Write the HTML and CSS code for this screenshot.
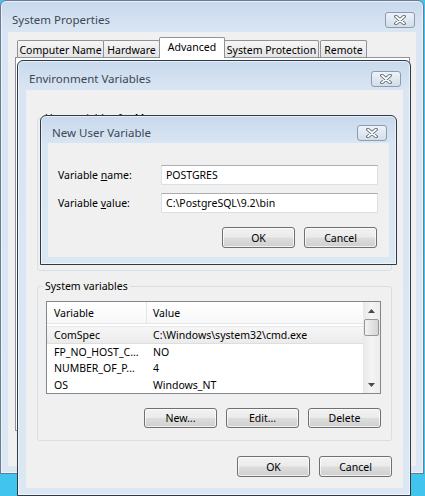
FILE: index.html
```html
<!DOCTYPE html>
<html>
<head>
<meta charset="utf-8">
<title>System Properties</title>
<link rel="stylesheet" href="styles.css">
</head>
<body>
<div class="desktop">

  <div class="window sys">
    <div class="titlebar">
      <span class="title">System Properties</span>
      <span class="close"><svg width="14" height="10" viewBox="0 0 14 10"><path d="M3 1.5 L11 8.5 M11 1.5 L3 8.5" stroke="#55606c" stroke-width="3.6" stroke-linecap="round"/><path d="M3 1.5 L11 8.5 M11 1.5 L3 8.5" stroke="#ffffff" stroke-width="1.8" stroke-linecap="round"/></svg></span>
    </div>
    <div class="client sys-client">
      <div class="tabs">
        <div class="tab t-cn">Computer Name</div>
        <div class="tab t-hw">Hardware</div>
        <div class="tab t-adv active">Advanced</div>
        <div class="tab t-sp">System Protection</div>
        <div class="tab t-rm">Remote</div>
      </div>
      <div class="tabpage"></div>
    </div>
  </div>

  <div class="window env">
    <div class="titlebar">
      <span class="title">Environment Variables</span>
      <span class="close"><svg width="14" height="10" viewBox="0 0 14 10"><path d="M3 1.5 L11 8.5 M11 1.5 L3 8.5" stroke="#55606c" stroke-width="3.6" stroke-linecap="round"/><path d="M3 1.5 L11 8.5 M11 1.5 L3 8.5" stroke="#ffffff" stroke-width="1.8" stroke-linecap="round"/></svg></span>
    </div>
    <div class="client env-client">
      <fieldset class="group user-group">
        <legend>User variables for Manager</legend>
        <div class="user-space"></div>
      </fieldset>
      <fieldset class="group sys-group">
        <legend>System variables</legend>
        <div class="listview">
          <div class="lv-body">
            <div class="lv-head"><span class="c1">Variable</span><span class="c2">Value</span></div>
            <div class="lv-row sel"><span class="c1">ComSpec</span><span class="c2">C:\Windows\system32\cmd.exe</span></div>
            <div class="lv-row"><span class="c1">FP_NO_HOST_C...</span><span class="c2">NO</span></div>
            <div class="lv-row"><span class="c1">NUMBER_OF_P...</span><span class="c2">4</span></div>
            <div class="lv-row"><span class="c1">OS</span><span class="c2">Windows_NT</span></div>
          </div>
          <div class="scrollbar">
            <div class="sb-btn"><svg width="7" height="4" viewBox="0 0 7 4"><path d="M0 4 L3.5 0 L7 4 Z" fill="#4a4a4a"/></svg></div>
            <div class="sb-thumb"></div>
            <div class="sb-track"></div>
            <div class="sb-btn"><svg width="7" height="4" viewBox="0 0 7 4"><path d="M0 0 L7 0 L3.5 4 Z" fill="#4a4a4a"/></svg></div>
          </div>
        </div>
        <div class="btn-row">
          <button class="btn">New...</button>
          <button class="btn">Edit...</button>
          <button class="btn">Delete</button>
        </div>
      </fieldset>
      <div class="btn-row footer">
        <button class="btn">OK</button>
        <button class="btn">Cancel</button>
      </div>
    </div>
  </div>

  <div class="window dlg">
    <div class="titlebar">
      <span class="title">New User Variable</span>
      <span class="close"><svg width="14" height="10" viewBox="0 0 14 10"><path d="M3 1.5 L11 8.5 M11 1.5 L3 8.5" stroke="#55606c" stroke-width="3.6" stroke-linecap="round"/><path d="M3 1.5 L11 8.5 M11 1.5 L3 8.5" stroke="#ffffff" stroke-width="1.8" stroke-linecap="round"/></svg></span>
    </div>
    <div class="client dlg-client">
      <div class="field">
        <label class="lbl">Variable <u>n</u>ame:</label>
        <div class="input">POSTGRES</div>
      </div>
      <div class="field">
        <label class="lbl">Variable <u>v</u>alue:</label>
        <div class="input">C:\PostgreSQL\9.2\bin</div>
      </div>
      <div class="btn-row dlg-btns">
        <button class="btn">OK</button>
        <button class="btn">Cancel</button>
      </div>
    </div>
  </div>

</div>
</body>
</html>
```

FILE: styles.css
```css
html, body {
  margin: 0;
  padding: 0;
}
body {
  width: 425px;
  height: 496px;
  overflow: hidden;
  background: #41c5ee;
  font-family: "Noto Sans", "Open Sans", sans-serif;
  font-size: 10.5px;
  color: #000;
}
.desktop {
  position: relative;
  width: 425px;
  height: 496px;
}

/* generic window */
.window {
  position: absolute;
  box-sizing: border-box;
  display: flex;
  flex-direction: column;
  border: 1px solid #2f3a46;
  border-radius: 6px 6px 0 0;
  background: linear-gradient(#c8d9ed, #d9e5f3 28px, #dce7f4);
  box-shadow: inset 0 0 0 1px rgba(255,255,255,0.55);
}
.titlebar {
  flex: none;
  display: flex;
  align-items: center;
  justify-content: space-between;
  box-sizing: border-box;
}
.title {
  font-size: 11.5px;
  color: #3e4753;
}
.close {
  width: 30px;
  height: 16px;
  box-sizing: border-box;
  border: 1px solid #8c9cb0;
  border-radius: 3px;
  background: linear-gradient(#eef3f9, #d3dde9);
  display: flex;
  align-items: center;
  justify-content: center;
}
.client {
  background: #f0f0f0;
  box-sizing: border-box;
}

/* System Properties */
.sys {
  left: 0;
  top: 0;
  width: 424px;
  height: 474px;
  border-color: #6a7c92;
}
.sys .titlebar {
  height: 31px;
  padding: 6px 8px 0 11px;
}
.sys-client {
  flex: 1;
  margin: 0 7px 7px 7px;
  display: flex;
  flex-direction: column;
  padding-top: 6px;
}
.tabs {
  display: flex;
  align-items: flex-end;
  height: 19px;
  padding-left: 9px;
  position: relative;
  z-index: 1;
}
.tab {
  box-sizing: border-box;
  height: 17px;
  border: 1px solid #8e929a;
  border-bottom: none;
  background: linear-gradient(#f6f6f6, #e4e4e4);
  display: flex;
  align-items: center;
  justify-content: center;
  padding-top: 1px;
  white-space: nowrap;
  border-radius: 2px 2px 0 0;
  flex: none;
}
.t-cn { width: 87px; }
.t-hw { width: 57px; margin-left: -1px; }
.t-adv { width: 66px; }
.t-sp { width: 95px; }
.t-rm { width: 47px; margin-left: 1px; }
.tab.active {
  height: 21px;
  margin: 0 -1px -1px -1px;
  padding: 0 0 3px;
  background: #ffffff;
  position: relative;
}
.tabpage {
  flex: none;
  height: 372px;
  margin: 0 6px 0 7px;
  border: 1px solid #8e929a;
  background: #ffffff;
}

/* Environment Variables */
.env {
  left: 17px;
  top: 60px;
  width: 394px;
  height: 436px;
}
.env .titlebar {
  height: 29px;
  padding: 6px 9px 0 11px;
}
.env-client {
  flex: 1;
  margin: 0 7px 7px 8px;
  padding: 21px 11px 0 11px;
  display: flex;
  flex-direction: column;
}
.group {
  margin: 0;
  padding: 0;
  border: 1px solid #d5dfe5;
  border-radius: 3px;
  min-width: 0;
}
.group legend {
  padding: 0 2px;
  margin-left: 5px;
  line-height: 14px;
}
.user-space {
  height: 145px;
}
.sys-group {
  margin-top: 8px;
  padding: 8px 10px 12px 8px;
}
.sys-group legend {
  margin-left: -3px;
}
.listview {
  display: flex;
  height: 93px;
  box-sizing: border-box;
  border: 1px solid #828790;
  background: #ffffff;
}
.lv-body {
  flex: 1;
  display: flex;
  flex-direction: column;
}
.lv-head {
  display: flex;
  height: 23px;
  align-items: center;
  box-sizing: border-box;
  border-bottom: 1px solid #e5e5e5;
  background: linear-gradient(#ffffff, #f7f8f9);
}
.lv-head .c1 {
  border-right: 1px solid #e3e5e8;
  align-self: stretch;
  display: flex;
  align-items: center;
}
.lv-row {
  display: flex;
  height: 16.8px;
  align-items: center;
  white-space: nowrap;
}
.lv-row.sel {
  margin-top: 2px;
  background: linear-gradient(#f6f6f6, #ebebeb);
  border-top: 1px solid #e8e8e8;
  border-bottom: 1px solid #dedede;
  height: 18px;
  box-sizing: border-box;
}
.c1 {
  width: 100px;
  box-sizing: border-box;
  padding-left: 7px;
  flex: none;
}
.c2 {
  padding-left: 6px;
}
.scrollbar {
  width: 17px;
  flex: none;
  display: flex;
  flex-direction: column;
  background: linear-gradient(90deg, #e8e8e8, #f4f4f4 50%, #ececec);
}
.sb-btn {
  height: 17px;
  display: flex;
  align-items: center;
  justify-content: center;
  flex: none;
}
.sb-thumb {
  height: 17px;
  margin: 0 1px;
  box-sizing: border-box;
  border: 1px solid #979797;
  border-radius: 2px;
  background: linear-gradient(90deg, #f3f3f3, #e4e4e4 50%, #d5d5d5);
  flex: none;
}
.sb-track {
  flex: 1;
}
.btn-row {
  display: flex;
  justify-content: flex-end;
  gap: 9px;
}
.sys-group .btn-row {
  margin-top: 14px;
}
.btn {
  width: 73px;
  height: 20px;
  box-sizing: border-box;
  border: 1px solid #707070;
  border-radius: 3px;
  background: linear-gradient(#f2f2f2, #ebebeb 48%, #dddddd 52%, #cfcfcf);
  box-shadow: inset 0 0 0 1px rgba(255,255,255,0.7);
  font-family: inherit;
  font-size: 10.5px;
  color: #000;
  padding: 0;
  margin: 0;
  line-height: 18px;
}
.footer {
  margin-top: 15px;
}
.footer .btn {
  height: 21px;
}

/* New User Variable dialog */
.dlg {
  left: 40px;
  top: 115px;
  width: 357px;
  height: 150px;
}
.dlg .titlebar {
  height: 27px;
  padding: 6px 9px 0 11px;
}
.dlg-client {
  flex: 1;
  margin: 0 7px 7px 7px;
  padding: 22px 11px 0 10px;
  display: flex;
  flex-direction: column;
  gap: 8px;
}
.field {
  display: flex;
  align-items: center;
}
.lbl {
  width: 103px;
  flex: none;
}
.input {
  flex: 1;
  height: 20px;
  box-sizing: border-box;
  border: 1px solid #dbdfe6;
  border-top-color: #abadb3;
  background: #ffffff;
  padding-left: 4px;
  display: flex;
  align-items: center;
}
.dlg-btns {
  margin-top: 6px;
  padding-right: 1px;
}
.dlg-btns .btn {
  height: 21px;
}
```
